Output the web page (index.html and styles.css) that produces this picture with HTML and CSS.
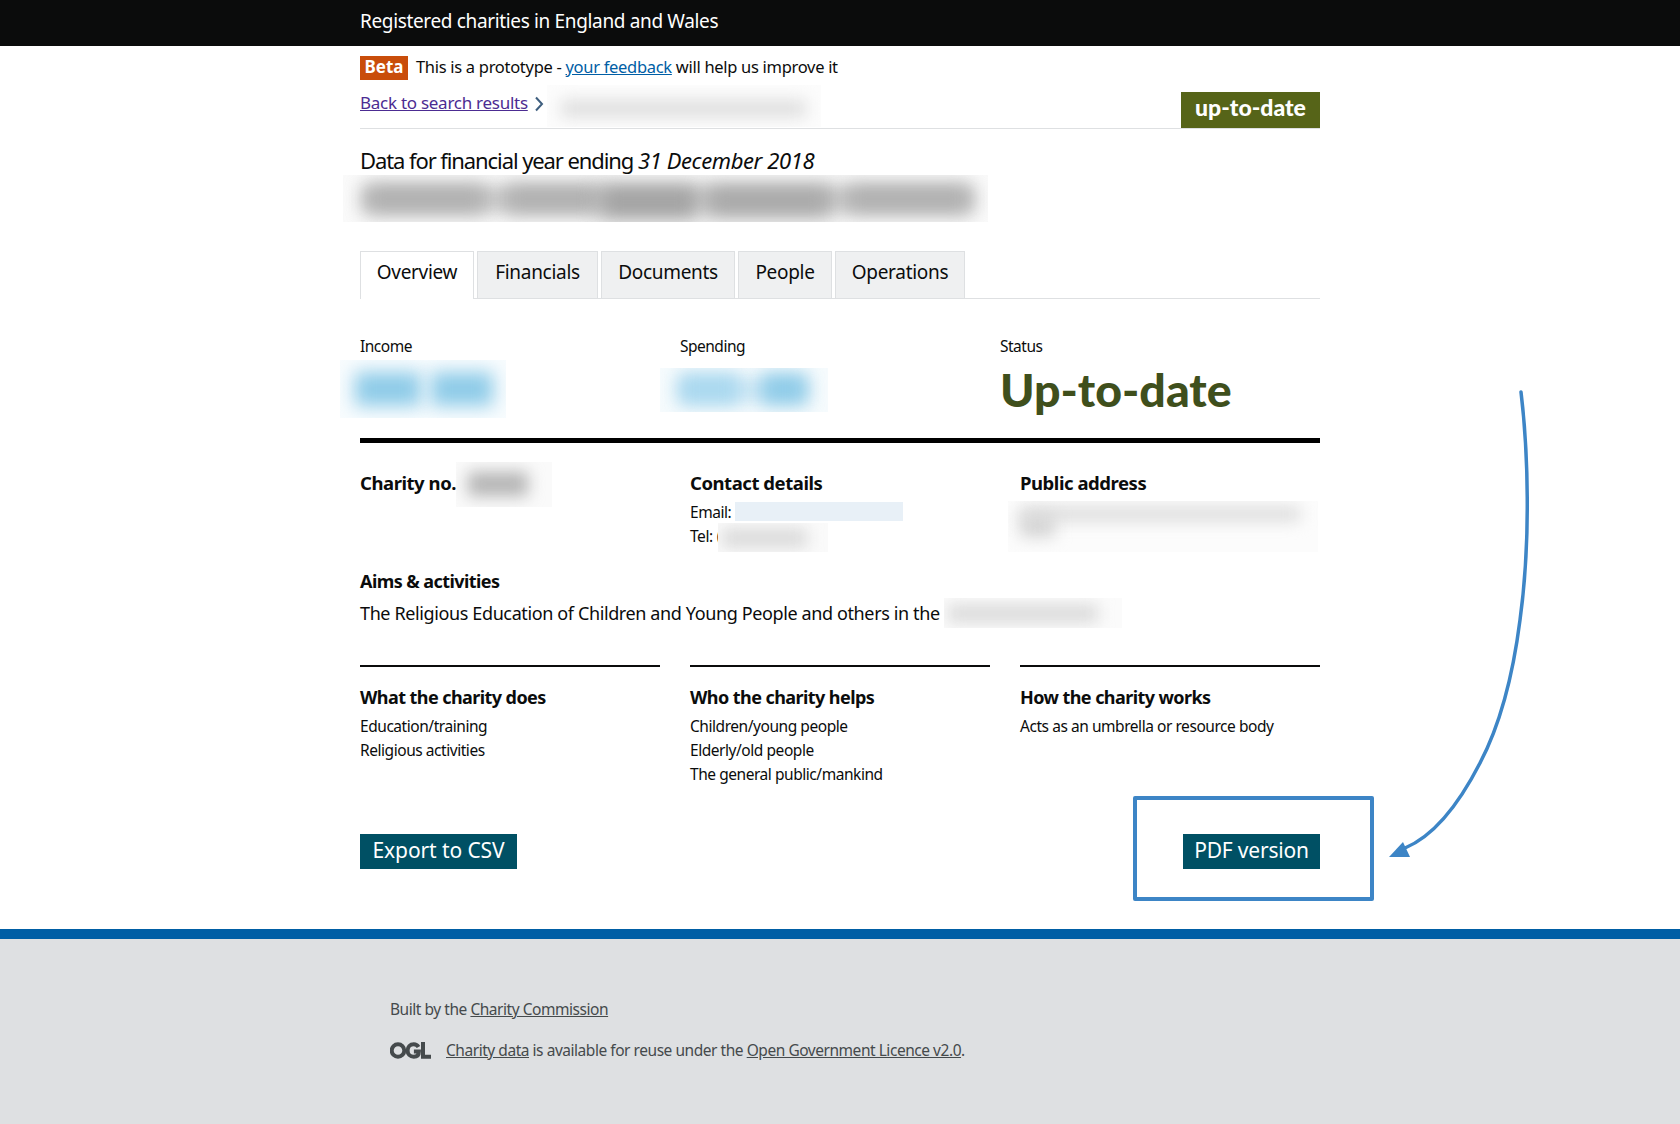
FILE: index.html
```html
<!DOCTYPE html>
<html lang="en">
<head>
    <meta charset="UTF-8">
    <title>Registered charities in England and Wales</title>
    <link rel="stylesheet" href="styles.css">
</head>
<body>
    <header class="site-header">
        <div class="wrap">Registered charities in England and Wales</div>
    </header>

    <main class="wrap main">
        <div class="phase">
            <strong class="phase-tag">Beta</strong>
            <span>This is a prototype - <a href="#" class="link">your feedback</a> will help us improve it</span>
        </div>

        <div class="crumbs">
            <a href="#" class="visited">Back to search results</a>
            <svg class="chevron" width="10" height="16" viewBox="0 0 10 16"><path d="M2 1.500 8 8l-6 6.500" fill="none" stroke="#3f5f7f" stroke-width="2"/></svg>
            <div class="blur crumb-blur"><i class="blob b-crumb"></i></div>
            <span class="badge">up-to-date</span>
        </div>

        <p class="year">Data for financial year ending <em>31 December 2018</em></p>
        <div class="blur title-blur">
            <i class="blob b-band"></i>
            <i class="blob b-word w1"></i>
            <i class="blob b-word w2"></i>
            <i class="blob b-word w3"></i>
            <i class="blob b-word w4"></i>
            <i class="blob b-word w5"></i>
        </div>

        <nav class="tabs">
            <a href="#" class="tab active t1">Overview</a>
            <a href="#" class="tab t2">Financials</a>
            <a href="#" class="tab t3">Documents</a>
            <a href="#" class="tab t4">People</a>
            <a href="#" class="tab t5">Operations</a>
        </nav>

        <section class="stats">
            <div>
                <div class="stat-label">Income</div>
                <div class="blur income-blur"><i class="blob b-blue1"></i><i class="blob b-blue2"></i></div>
            </div>
            <div>
                <div class="stat-label">Spending</div>
                <div class="blur spending-blur"><i class="blob b-blue5"></i><i class="blob b-blue3"></i><i class="blob b-blue4"></i></div>
            </div>
            <div>
                <div class="stat-label">Status</div>
                <div class="status">Up-to-date</div>
            </div>
        </section>

        <section class="columns details">
            <div>
                <h3 class="inline-head">Charity no.</h3>
                <div class="blur no-blur"><i class="blob b-no"></i></div>
            </div>
            <div>
                <h3>Contact details</h3>
                <div class="line">Email: <span class="email-blur"></span></div>
                <div class="line tel">Tel: <span class="tel-cut">(</span><div class="blur tel-blur"><i class="blob b-tel"></i></div></div>
            </div>
            <div>
                <h3>Public address</h3>
                <div class="blur addr-blur"><i class="blob b-addr1"></i><i class="blob b-addr2"></i></div>
            </div>
        </section>

        <section class="aims">
            <h3>Aims &amp; activities</h3>
            <div class="aims-text">
                <span>The Religious Education of Children and Young People and others in the</span>
                <div class="blur aims-blur"><i class="blob b-aims"></i></div>
            </div>
        </section>

        <section class="columns lists">
            <div class="list-col">
                <h3>What the charity does</h3>
                <div class="line">Education/training</div>
                <div class="line">Religious activities</div>
            </div>
            <div class="list-col">
                <h3>Who the charity helps</h3>
                <div class="line">Children/young people</div>
                <div class="line">Elderly/old people</div>
                <div class="line">The general public/mankind</div>
            </div>
            <div class="list-col">
                <h3>How the charity works</h3>
                <div class="line">Acts as an umbrella or resource body</div>
            </div>
        </section>

        <div class="actions">
            <a href="#" class="button csv">Export to CSV</a>
            <div class="pdf-wrap">
                <a href="#" class="button pdf">PDF version</a>
                <div class="callout"></div>
            </div>
        </div>
    </main>

    <svg class="arrow" width="180" height="520" viewBox="0 0 180 520">
        <path d="M133 2C140 60 143 150 132 230C125 285 112 335 92 373C72 412 48 445 17 458" fill="none" stroke="#3d85c6" stroke-width="3.500" stroke-linecap="round"/>
        <path d="M1 467 15 452 22 467Z" fill="#3d85c6"/>
    </svg>

    <footer class="site-footer">
        <div class="footer-inner">
            <p class="built">Built by the <a href="#">Charity Commission</a></p>
            <div class="licence">
                <svg class="ogl" width="41" height="17" viewBox="0 0 41 17">
                    <g fill="none" stroke="#454a4c" stroke-width="4">
                        <circle cx="8" cy="8.500" r="6.300"/>
                        <path d="M28.500 5C27.300 3 25.800 2.200 23.800 2.200 20 2.200 17.600 5 17.600 8.500s2.400 6.300 6.200 6.300c3.300 0 5.100-2 5.100-5.300h-5"/>
                        <path d="M33 0v14.800h8"/>
                    </g>
                </svg>
                <span><a href="#">Charity data</a> is available for reuse under the <a href="#">Open Government Licence v2.0</a>.</span>
            </div>
        </div>
    </footer>
</body>
</html>
```

FILE: styles.css
```css
body {
    margin: 0;
    position: relative;
    min-height: 1124px;
    font-family: "Noto Sans", Arial, sans-serif;
    color: #0b0c0c;
    background-color: #fff;
    font-size: 16px;
}

a {
    color: inherit;
}

h3 {
    margin: 0;
    font-size: 18px;
    font-weight: 700;
    letter-spacing: -0.57px;
    line-height: 24px;
}

.wrap {
    width: 960px;
    margin: 0 auto;
}

.site-header {
    height: 46px;
    background-color: #0b0c0c;
    color: #fff;
    font-size: 19px;
    line-height: 42px;
    letter-spacing: -0.35px;
}

.main {
    box-sizing: border-box;
    height: 883px;
    padding-top: 10px;
}

.phase {
    display: flex;
    align-items: center;
    gap: 8px;
    height: 24px;
    font-size: 16.500px;
    line-height: 22px;
    letter-spacing: -0.3px;
}

.phase span {
    margin-top: -3px;
}

.phase-tag {
    width: 48px;
    height: 24px;
    line-height: 21px;
    text-align: center;
    background-color: #c94d0a;
    color: #fff;
    font-size: 17px;
    letter-spacing: 0;
}

.link {
    color: #005ea5;
}

.visited {
    color: #4c2c92;
}

.crumbs {
    display: flex;
    align-items: flex-end;
    height: 48px;
    border-bottom: 1px solid #dee0e2;
    font-size: 17px;
    letter-spacing: -0.27px;
}

.crumbs .visited {
    margin-bottom: 14px;
}

.chevron {
    margin: 0 0 16px 6px;
}

.blur {
    position: relative;
    overflow: hidden;
    flex: none;
}

.blob {
    position: absolute;
    display: block;
    filter: blur(8px);
}

.crumb-blur {
    width: 274px;
    height: 42px;
    margin: 0 0 1px 3px;
    background-color: #fcfcfc;
}

.b-crumb {
    left: 14px;
    top: 15px;
    width: 245px;
    height: 17px;
    background-color: #dedede;
}

.badge {
    margin-left: auto;
    width: 139px;
    height: 36px;
    line-height: 31px;
    text-align: center;
    background-color: #566418;
    color: #fff;
    font-family: Lato, sans-serif;
    font-weight: 900;
    font-size: 23px;
    letter-spacing: 0;
}

.year {
    margin: 17px 0 0;
    font-size: 22px;
    line-height: 28px;
    letter-spacing: -1.09px;
}

.year em {
    letter-spacing: -0.38px;
}

.title-blur {
    width: 645px;
    height: 47px;
    margin: 1px 0 0 -17px;
    background-color: #fafafa;
}

.b-band {
    left: 20px;
    top: 12px;
    width: 610px;
    height: 24px;
    background-color: #ccc;
}

.b-word {
    top: 10px;
    height: 28px;
    background-color: #aeaeae;
    filter: blur(10px);
}

.w1 { left: 22px; width: 122px; }
.w2 { left: 161px; width: 96px; }
.w3 { left: 257px; width: 98px; height: 34px; background-color: #a2a2a2; }
.w4 { left: 363px; width: 126px; height: 32px; background-color: #a8a8a8; }
.w5 { left: 502px; width: 126px; }

.tabs {
    display: flex;
    gap: 3px;
    height: 47px;
    margin-top: 29px;
    border-bottom: 1px solid #dee0e2;
}

.tab {
    box-sizing: border-box;
    height: 47px;
    text-align: center;
    line-height: 40px;
    font-size: 19px;
    letter-spacing: -0.3px;
    text-decoration: none;
    background-color: #eff0f1;
    border: 1px solid #dee0e2;
    border-bottom: 0;
}

.tab.active {
    height: 48px;
    background-color: #fff;
}

.t1 { width: 114px; }
.t2 { width: 121px; }
.t3 { width: 134px; }
.t4 { width: 94px; }
.t5 { width: 130px; }

.stats {
    display: grid;
    grid-template-columns: repeat(3, 320px);
    height: 102px;
    margin-top: 37px;
    border-bottom: 5px solid #000;
}

.stat-label {
    font-size: 15.500px;
    line-height: 20px;
    letter-spacing: -0.5px;
}

.income-blur {
    width: 166px;
    height: 58px;
    margin: 4px 0 0 -20px;
    background-color: #f8fcfe;
}

.spending-blur {
    width: 168px;
    height: 44px;
    margin: 12px 0 0 -20px;
    background-color: #f6fbfd;
}

.b-blue1, .b-blue2, .b-blue3, .b-blue4 {
    height: 34px;
    background-color: #8ecbe8;
    filter: blur(9px);
}

.b-blue1 { left: 15px; top: 12px; width: 66px; }
.b-blue2 { left: 91px; top: 12px; width: 62px; }
.b-blue3 { left: 18px; top: 6px; width: 62px; height: 30px; background-color: #a9d8ef; }
.b-blue4 { left: 101px; top: 6px; width: 46px; height: 30px; }
.b-blue5 { left: 22px; top: 10px; width: 125px; height: 24px; background-color: #cfe8f5; }

.status {
    margin-top: 5px;
    font-family: Lato, sans-serif;
    font-weight: 900;
    font-size: 46.500px;
    line-height: 56px;
    color: #3f4f1c;
}

.columns {
    display: grid;
    grid-template-columns: repeat(3, 300px);
    column-gap: 30px;
}

.details {
    height: 104px;
    margin-top: 24px;
}

.details h3 {
    margin-top: 4px;
    font-size: 18.500px;
    letter-spacing: -0.45px;
}

.details > div:first-child {
    display: flex;
    align-items: flex-start;
}

.no-blur {
    width: 96px;
    height: 45px;
    margin-top: -5px;
    background-color: #fafafa;
}

.b-no {
    left: 12px;
    top: 10px;
    width: 60px;
    height: 24px;
    background-color: #b4b4b4;
}

.line {
    font-size: 15.500px;
    letter-spacing: -0.45px;
    line-height: 24px;
}

.details .line {
    margin-top: 5px;
}

.details .tel {
    display: flex;
    margin-top: 0;
    height: 24px;
}

.tel-cut {
    margin-left: 4px;
}

.email-blur {
    display: inline-block;
    width: 168px;
    height: 19px;
    vertical-align: top;
    margin-top: 2px;
    background-color: #e8f0f7;
}

.tel-blur {
    width: 110px;
    height: 29px;
    margin: -1px 0 0 -3px;
    background-color: #fafafa;
}

.b-tel {
    left: 4px;
    top: 6px;
    width: 85px;
    height: 18px;
    background-color: #d8d8d8;
}

.addr-blur {
    width: 310px;
    height: 51px;
    margin: 6px 0 0 -12px;
    background-color: #fcfcfc;
}

.b-addr1 {
    left: 12px;
    top: 6px;
    width: 280px;
    height: 14px;
    background-color: #dadada;
}

.b-addr2 {
    left: 12px;
    top: 14px;
    width: 35px;
    height: 22px;
    background-color: #d4d4d4;
}

.aims {
    margin-top: -2px;
}

.aims-text {
    display: flex;
    align-items: center;
    gap: 4px;
    height: 36px;
    margin-top: 2px;
    font-size: 18px;
    letter-spacing: -0.38px;
}

.aims-blur {
    width: 178px;
    height: 30px;
    background-color: #fbfbfb;
}

.b-aims {
    left: 4px;
    top: 7px;
    width: 150px;
    height: 17px;
    background-color: #d8d8d8;
}

.lists {
    height: 169px;
    margin-top: 34px;
}

.list-col {
    border-top: 2px solid #0b0c0c;
    padding-top: 18px;
}

.list-col h3 {
    margin-bottom: 5px;
}

.actions {
    display: flex;
    justify-content: space-between;
}

.button {
    display: block;
    box-sizing: border-box;
    height: 35px;
    line-height: 32px;
    text-align: center;
    color: #fff;
    background-color: #005064;
    text-decoration: none;
    font-size: 21px;
    letter-spacing: -0.1px;
}

.csv {
    width: 157px;
}

.pdf {
    width: 137px;
    letter-spacing: -0.2px;
}

.pdf-wrap {
    position: relative;
}

.callout {
    position: absolute;
    left: -50px;
    top: -38px;
    width: 241px;
    height: 105px;
    box-sizing: border-box;
    border: 4px solid #3d85c6;
    border-radius: 2px;
}

.arrow {
    position: absolute;
    left: 1388px;
    top: 390px;
}

.site-footer {
    height: 185px;
    background-color: #dee0e2;
    border-top: 10px solid #005ea5;
    color: #454a4c;
    font-size: 15.500px;
    letter-spacing: -0.46px;
}

.footer-inner {
    width: 900px;
    margin: 0 auto;
}

.built {
    margin: 0;
    padding-top: 60px;
    line-height: 20px;
}

.licence {
    display: flex;
    align-items: center;
    gap: 15px;
    margin-top: 21px;
    line-height: 20px;
}

.ogl {
    flex: none;
}
```
